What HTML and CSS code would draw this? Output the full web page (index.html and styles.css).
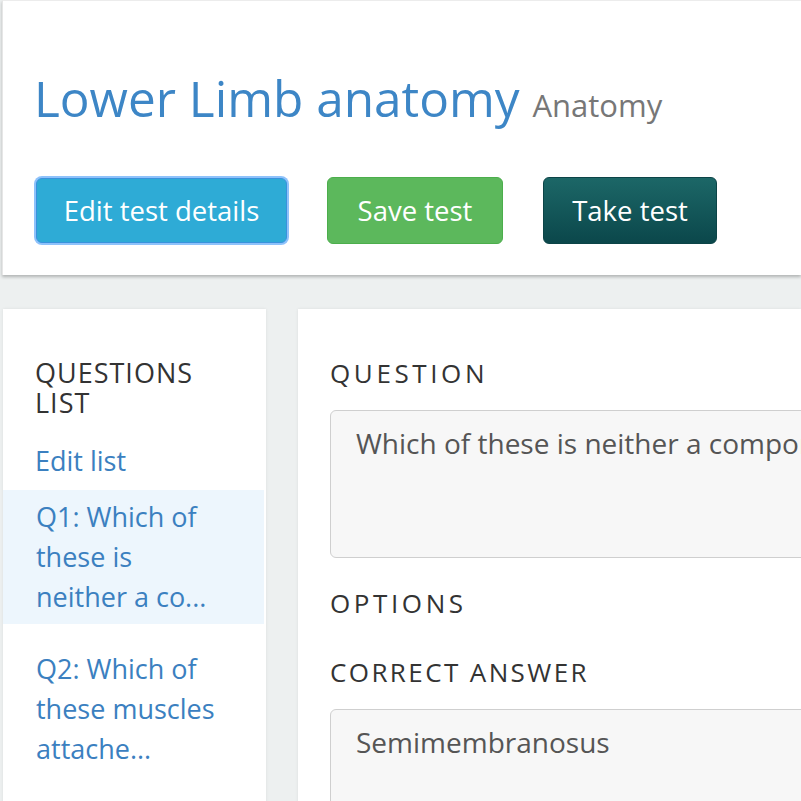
FILE: index.html
```html
<!DOCTYPE html>
<html>
<head>
<meta charset="utf-8">
<link rel="stylesheet" href="styles.css">
</head>
<body>
<header class="header">
  <h1 class="title">Lower Limb anatomy <small class="subject">Anatomy</small></h1>
  <div class="actions">
    <button class="btn btn-edit">Edit test details</button>
    <button class="btn btn-save">Save test</button>
    <button class="btn btn-take">Take test</button>
  </div>
</header>
<div class="content">
  <aside class="sidebar">
    <h2 class="side-title">QUESTIONS LIST</h2>
    <a class="edit-link">Edit list</a>
    <ul class="qlist">
      <li class="qitem active">Q1: Which of these is neither a co...</li>
      <li class="qitem">Q2: Which of these muscles attache...</li>
    </ul>
  </aside>
  <main class="editor">
    <h3 class="label">QUESTION</h3>
    <div class="field field-q">Which of these is neither a component of the pes anserinus nor attached to it?</div>
    <h3 class="label label-options">OPTIONS</h3>
    <h3 class="label label-answer">CORRECT ANSWER</h3>
    <div class="field field-a">Semimembranosus</div>
  </main>
</div>
</body>
</html>
```

FILE: styles.css
```css
html, body {
  margin: 0;
  padding: 0;
}
body {
  background: #edf0f0;
  font-family: "Open Sans", "Noto Sans", sans-serif;
  width: 801px;
  height: 801px;
  overflow: hidden;
}
.header {
  background: #fff;
  margin-left: 2px;
  border-top: 1px solid #ececec;
  border-left: 1px solid #e6e6e6;
  height: 275px;
  box-sizing: border-box;
  padding: 64px 0 0 33px;
  box-shadow: 0 2px 3px rgba(0,0,0,0.25);
  position: relative;
}
.title {
  margin: 0 0 0 -2px;
  font-weight: 400;
  font-size: 49.5px;
  line-height: 66px;
  color: #3d86c6;
  white-space: nowrap;
}
.subject {
  font-size: 31px;
  color: #777;
}
.actions {
  display: flex;
  gap: 40px;
  margin-top: 39px;
  padding-left: 0;
}
.btn {
  font-family: inherit;
  font-size: 27.5px;
  height: 67px;
  border-radius: 6px;
  color: #fff;
  border: 1px solid transparent;
  padding: 0;
  cursor: pointer;
}
.btn-edit {
  background: #2eabd6;
  border-color: #3a92dc;
  box-shadow: 0 0 0 2px #8ec2fb;
  width: 251px;
  height: 65px;
  margin-top: 1px;
}
.btn-save {
  background: #5cb85c;
  border-color: #4cae4c;
  width: 176px;
}
.btn-take {
  background: linear-gradient(#1c6767, #0b474b);
  border-color: #0c4447;
  width: 174px;
}
.content {
  display: flex;
  gap: 32px;
  margin-top: 34px;
  padding-left: 3px;
}
.sidebar {
  background: #fff;
  width: 263px;
  height: 520px;
  flex-shrink: 0;
  box-sizing: border-box;
  padding: 49px 0 0 0;
  box-shadow: 0 0 3px rgba(0,0,0,0.08);
}
.side-title {
  margin: 0 30px 0 32px;
  font-weight: 400;
  font-size: 27px;
  line-height: 30px;
  letter-spacing: 1px;
  color: #333;
}
.edit-link {
  display: block;
  margin: 23px 0 9px 32px;
  font-size: 27px;
  line-height: 40px;
  color: #3b80c0;
}
.qlist {
  list-style: none;
  margin: 0;
  padding: 0;
  display: flex;
  flex-direction: column;
  gap: 18px;
}
.qitem {
  padding: 7px 40px 7px 33px;
  font-size: 27px;
  line-height: 40px;
  color: #3b80c0;
  margin-right: 2px;
}
.qitem.active {
  background: #edf6fd;
}
.editor {
  flex: 1;
  background: #fff;
  height: 520px;
  padding: 47px 0 0 32px;
  box-shadow: 0 0 3px rgba(0,0,0,0.08);
  overflow: hidden;
}
.label {
  margin: 0;
  font-weight: 400;
  font-size: 26px;
  line-height: 34px;
  letter-spacing: 3.6px;
  color: #333;
}
.field {
  margin-top: 20px;
  background: #f7f7f7;
  border: 1px solid #cfcfcf;
  border-radius: 6px;
  box-sizing: border-box;
  padding: 12px 25px;
  font-size: 28px;
  line-height: 40px;
  color: #555;
  white-space: nowrap;
  overflow: hidden;
  width: 560px;
}
.field-q {
  height: 148px;
}
.field-a {
  height: 140px;
  margin-top: 20px;
}
.label-options {
  margin-top: 28px;
}
.label-answer {
  margin-top: 35px;
  letter-spacing: 2.4px;
}
```
